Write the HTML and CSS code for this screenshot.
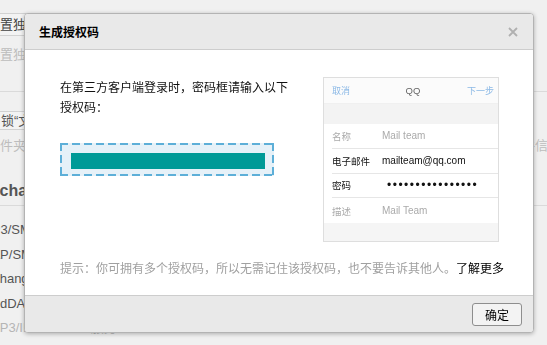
FILE: index.html
```html
<!DOCTYPE html>
<html lang="zh-CN">
  <head>
    <meta charset="UTF-8" />
    <meta name="viewport" content="width=device-width, initial-scale=1.0" />
    <title>生成授权码</title>
    <link rel="stylesheet" href="styles.css">
  </head>
  <body>
    <!-- settings page behind the dialog -->
    <div class="page">
      <div class="sec sec-top">
        <div class="pbtn">设置独立密码</div>
        <div class="hint hint-first">设置独立密码后更安全</div>
      </div>

      <div class="sec sec-mid">
        <div class="row-split">
          <div class="lockbox">锁“文件夹”</div>
        </div>
        <div class="row-split">
          <div class="hint hint-folder">文件夹内的邮件</div>
          <div class="hint hint-right">邮件信息</div>
        </div>
        <div class="sec-title">Exchange/CardDAV/CalDAV服务</div>
      </div>

      <div class="sec sec-list">
        <div class="item item-pop">POP3/SMTP服务</div>
        <div class="item item-imap">IMAP/SMTP服务</div>
        <div class="item item-ex">Exchange服务</div>
        <div class="item item-dav">CardDAV/CalDAV服务</div>
        <div class="item item-note">POP3/IMAP/SMTP服务</div>
      </div>
    </div>

    <!-- dialog -->
    <div class="dialog">
      <div class="dlg-head">
        <span class="dlg-title">生成授权码</span>
        <svg class="dlg-close" width="10" height="10" viewBox="0 0 10 10">
          <path d="M1 1 L9 9 M9 1 L1 9" stroke="#b0b0b0" stroke-width="1.8" fill="none" />
        </svg>
      </div>

      <div class="dlg-body">
        <div class="content">
          <div class="intro">
            <p class="intro-text">在第三方客户端登录时，密码框请输入以下授权码：</p>
            <div class="code-box">
              <div class="code-bar"></div>
            </div>
          </div>

          <div class="phone">
            <div class="phone-bar">
              <span class="phone-link">取消</span>
              <span class="phone-title">QQ</span>
              <span class="phone-link phone-next">下一步</span>
            </div>
            <div class="phone-gap"></div>
            <div class="phone-list">
              <div class="phone-row muted">
                <span class="phone-label">名称</span>
                <span class="phone-value">Mail team</span>
              </div>
              <div class="phone-row">
                <span class="phone-label">电子邮件</span>
                <span class="phone-value">mailteam@qq.com</span>
              </div>
              <div class="phone-row">
                <span class="phone-label">密码</span>
                <span class="phone-value dots">••••••••••••••••</span>
              </div>
              <div class="phone-row muted">
                <span class="phone-label">描述</span>
                <span class="phone-value">Mail Team</span>
              </div>
            </div>
          </div>
        </div>

        <p class="tip">提示：你可拥有多个授权码，所以无需记住该授权码，也不要告诉其他人。<a class="more">了解更多</a></p>
      </div>

      <div class="dlg-foot">
        <button class="ok-btn">确定</button>
      </div>
    </div>
  </body>
</html>
```

FILE: styles.css
```css
body {
  margin: 0;
  height: 345px;
  overflow: hidden;
  background: #f0f0f0;
  font-family: "Liberation Sans", "Noto Sans CJK SC", sans-serif;
  font-size: 13px;
  color: #555;
}

/* ---------- page behind ---------- */
.page {
  width: 100%;
}
.sec {
  box-sizing: border-box;
  border-bottom: 1px solid #dadada;
}
.sec-top {
  height: 92px;
  padding-top: 13px;
}
.pbtn {
  display: inline-block;
  box-sizing: border-box;
  height: 23px;
  line-height: 21px;
  margin-left: -22px;
  padding: 0 8px;
  border: 1px solid #d2d2d2;
  background: #f3f3f3;
  color: #444;
}
.hint {
  line-height: 20px;
  color: #bdbdbd;
}
.hint-first {
  margin-top: 9px;
  margin-left: -13px;
}
.sec-mid {
  height: 114px;
  padding-top: 19px;
}
.row-split {
  display: flex;
  justify-content: space-between;
}
.lockbox {
  box-sizing: border-box;
  height: 19px;
  line-height: 17px;
  margin-left: -24px;
  padding-left: 24px;
  padding-right: 8px;
  border: 1px solid #d2d2d2;
  background: #f3f3f3;
  color: #555;
}
.hint-folder {
  margin-top: 6px;
  margin-left: -13px;
}
.hint-right {
  margin-top: 6px;
  margin-right: -14px;
}
.sec-title {
  margin-top: 25px;
  margin-left: -20px;
  font-size: 16px;
  font-weight: bold;
  line-height: 20px;
  color: #555;
}
.sec-list {
  border-bottom: none;
  padding-top: 12px;
}
.item {
  line-height: 24.5px;
  white-space: nowrap;
  color: #555;
}
.item-pop { margin-left: -27px; }
.item-imap { margin-left: -23px; }
.item-ex { margin-left: -22px; }
.item-dav { margin-left: -21px; }
.item-note {
  margin-left: -19px;
  color: #b5b5b5;
}

/* ---------- dialog ---------- */
.dialog {
  position: fixed;
  left: 24px;
  top: 13px;
  width: 510px;
  height: 320px;
  box-sizing: border-box;
  display: flex;
  flex-direction: column;
  overflow: hidden;
  background: #fff;
  border: 1px solid #b3b3b3;
  border-radius: 4px;
  box-shadow: 0 1px 4px rgba(0, 0, 0, 0.28);
  font-family: "Liberation Sans", "Noto Sans CJK SC", sans-serif;
  font-size: 12px;
  color: #222;
}
.dlg-head {
  flex: none;
  box-sizing: border-box;
  height: 36px;
  display: flex;
  align-items: center;
  justify-content: space-between;
  padding: 0 15px 0 14px;
  background: #e9e9e9;
  border-bottom: 1px solid #cdcdcd;
}
.dlg-title {
  font-weight: bold;
  color: #000;
  font-size: 12px;
}
.dlg-close {
  display: block;
  margin-top: 1px;
}
.dlg-body {
  flex: 1;
  min-height: 0;
  padding: 27px 34px 0 35px;
}
.content {
  display: flex;
  justify-content: space-between;
}
.intro {
  width: 230px;
}
.intro-text {
  margin: 1px 0 0;
  line-height: 20px;
  color: #111;
}
.code-box {
  box-sizing: border-box;
  width: 214px;
  height: 33px;
  margin-top: 25px;
  padding: 10px 9px 0 11px;
  background-color: #e6f1f8;
  background-image:
    repeating-linear-gradient(90deg, #5dafd8 0 8px, transparent 8px 12px),
    repeating-linear-gradient(90deg, #5dafd8 0 8px, transparent 8px 12px),
    repeating-linear-gradient(180deg, #5dafd8 0 8px, transparent 8px 12px),
    repeating-linear-gradient(180deg, #5dafd8 0 8px, transparent 8px 12px);
  background-size: 100% 2px, 100% 2px, 2px 100%, 2px 100%;
  background-position: left top, left bottom, left top, right top;
  background-repeat: no-repeat;
}
.code-bar {
  width: 194px;
  height: 16px;
  background: #009a97;
}

/* phone screenshot */
.phone {
  box-sizing: border-box;
  width: 176px;
  height: 165px;
  border: 1px solid #dedede;
  background: #f5f5f5;
  font-size: 9px;
}
.phone-bar {
  height: 25px;
  display: grid;
  grid-template-columns: 1fr auto 1fr;
  align-items: center;
  padding: 0 4px 0 8px;
  background: #fbfbfb;
  border-bottom: 1px solid #f0f0f0;
}
.phone-link {
  color: #8cb9e6;
}
.phone-next {
  text-align: right;
}
.phone-title {
  color: #666;
  font-size: 9.5px;
}
.phone-gap {
  height: 20px;
  background: #f3f3f3;
}
.phone-list {
  background: #fff;
  padding-left: 8px;
}
.phone-row {
  box-sizing: border-box;
  height: 24.75px;
  display: flex;
  align-items: center;
  color: #111;
  border-bottom: 1px solid #e6e6e6;
}
.phone-row:last-child {
  border-bottom: none;
}
.phone-row.muted {
  color: #aaa;
}
.phone-label {
  width: 50px;
  font-size: 9.5px;
}
.phone-value {
  font-size: 10px;
}
.dots {
  font-size: 12px;
  letter-spacing: 1.5px;
  margin-left: 5px;
}

.tip {
  margin: 17px 0 0;
  line-height: 20px;
  white-space: nowrap;
  color: #a0a0a0;
}
.more {
  color: #000;
  cursor: pointer;
}

.dlg-foot {
  flex: none;
  box-sizing: border-box;
  height: 37px;
  display: flex;
  justify-content: flex-end;
  align-items: flex-start;
  padding: 7px 11px 0 0;
  background: #e9e9e9;
  border-top: 1px solid #cdcdcd;
}
.ok-btn {
  width: 50px;
  height: 23px;
  padding: 0;
  border: 1px solid #8e8e8e;
  border-radius: 3px;
  background: #f3f3f3;
  font-family: "Liberation Sans", "Noto Sans CJK SC", sans-serif;
  font-size: 12px;
  color: #000;
}
```
